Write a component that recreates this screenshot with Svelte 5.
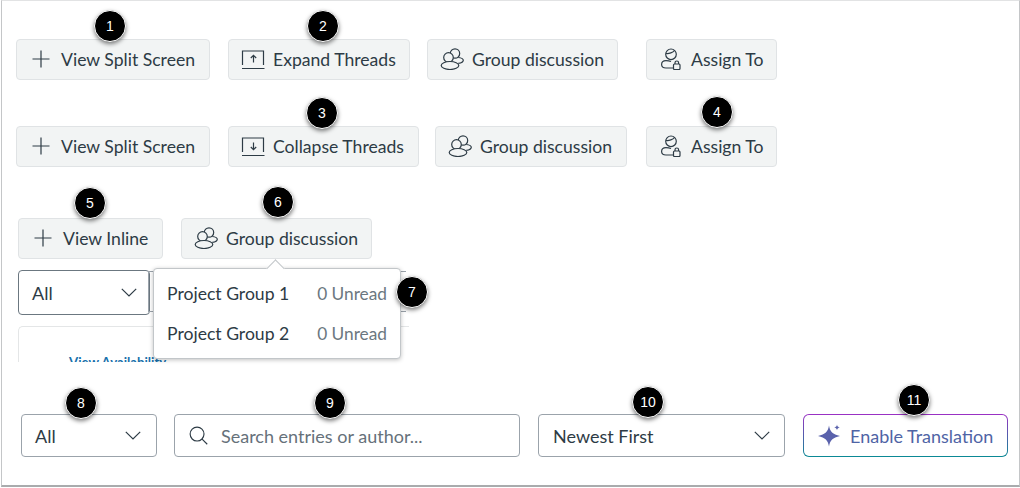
<script>
  const badges = [
    { n: 1, x: 110, y: 26 }, { n: 2, x: 323, y: 26 }, { n: 3, x: 322, y: 113 },
    { n: 4, x: 717, y: 112 }, { n: 5, x: 90, y: 203 }, { n: 6, x: 278, y: 202 },
    { n: 7, x: 412, y: 292 }, { n: 8, x: 81, y: 403 }, { n: 9, x: 330, y: 403 },
    { n: 10, x: 648, y: 402 }, { n: 11, x: 914, y: 400 }
  ];
</script>

{#snippet plus()}
  <svg class="ic" viewBox="0 0 18 18"><path d="M9 .5v17M.5 9h17" /></svg>
{/snippet}
{#snippet expand()}
  <svg class="ic wide" viewBox="0 0 24 22"><path d="M1.500 17V3h21v14M1 20.500h22.500M12.500 14.500V7.500M9.800 10 12.500 7.300 15.200 10" /></svg>
{/snippet}
{#snippet collapse()}
  <svg class="ic wide" viewBox="0 0 24 22"><path d="M1.500 17V3h21v14M1 20.500h22.500M12.500 7.500v7M9.800 12l2.700 2.700 2.700-2.700" /></svg>
{/snippet}
{#snippet group()}
  <svg class="ic wide" viewBox="0 0 24 22"><circle cx="15" cy="5.500" r="4.700" /><path d="M18.300 9.500c3 .4 5 1.400 5 2.800 0 1.500-2 2.700-5 3.100" /><circle class="front" cx="8.500" cy="9.500" r="4.800" /><ellipse class="front" cx="10" cy="17.500" rx="8.800" ry="4" /></svg>
{/snippet}
{#snippet assign()}
  <svg class="ic wide" viewBox="0 0 24 22"><circle cx="12" cy="6.300" r="5.300" /><path d="M7 5.500c3 .5 7-1 8.500-3" /><path d="M12 13.500c-2-.9-3.500-.9-5-.9-3 0-4.400 1.900-4.400 3.900S4 20 7 20h7" /><rect x="14.500" y="16" width="6.500" height="5.500" rx="1" /><path d="M16 16v-1.200a1.800 1.800 0 0 1 3.600 0V16" /></svg>
{/snippet}
{#snippet chevron()}
  <svg class="chev" viewBox="0 0 16 9"><path d="M.8.8 8 8 15.200.8" /></svg>
{/snippet}

<div class="frame">
  <div class="row r1">
    <button class="b w194">{@render plus()}View Split Screen</button>
    <button class="b w182">{@render expand()}Expand Threads</button>
    <button class="b w191">{@render group()}Group discussion</button>
    <button class="b w131">{@render assign()}Assign To</button>
  </div>
  <div class="row r2">
    <button class="b w194">{@render plus()}View Split Screen</button>
    <button class="b w191">{@render collapse()}Collapse Threads</button>
    <button class="b w192">{@render group()}Group discussion</button>
    <button class="b w131">{@render assign()}Assign To</button>
  </div>
  <div class="row r3">
    <button class="b w145">{@render plus()}View Inline</button>
    <button class="b w191">{@render group()}Group discussion</button>
  </div>

  <div class="clip">
    <div class="filters">
      <div class="sel dark s132"><span>All</span>{@render chevron()}</div>
      <div class="hidden-input"></div>
    </div>
    <div class="card"><a href="#top">View Availability</a></div>
  </div>

  <div class="row r5">
    <div class="sel s136"><span>All</span>{@render chevron()}</div>
    <div class="search">
      <svg class="mag" viewBox="0 0 20 20"><circle cx="8.500" cy="8.500" r="7.300" /><path d="m13.800 13.800 5.400 5.400" /></svg>
      <span>Search entries or author...</span>
    </div>
    <div class="sel s247"><span>Newest First</span>{@render chevron()}</div>
    <button class="ai">
      <svg class="spark" viewBox="0 0 24 24"><path d="M12 1.500c.9 6 3.700 9 11 10.500-7.300 1.500-10.100 4.500-11 10.500C11.100 16.500 8.300 13.500 1 12 8.300 10.500 11.100 7.500 12 1.500Z" /><path d="M20 .5c.2 1.700 1 2.600 2.800 2.900-1.800.3-2.600 1.200-2.800 2.900-.2-1.700-1-2.600-2.800-2.900C19 3.100 19.800 2.200 20 .5Z" /></svg>
      <span>Enable Translation</span>
    </button>
  </div>

  <div class="pop">
    <div class="tip"></div>
    <div class="item"><span>Project Group 1</span><span class="un">0 Unread</span></div>
    <div class="item"><span>Project Group 2</span><span class="un">0 Unread</span></div>
  </div>

  {#each badges as b}
    <div class="badge" style="left:{b.x - 18}px;top:{b.y - 17}px">{b.n}</div>
  {/each}
</div>

<style>
  :global(body) { margin: 0; background: #fff; }
  .frame {
    position: relative;
    box-sizing: border-box;
    width: 1019px;
    height: 487px;
    margin-left: 1px;
    border: 1px solid #c4c6c8;
    border-top-color: #e2e3e4;
    border-bottom: 2px solid #a9abad;
    background: #fff;
    font-family: Lato, "Liberation Sans", sans-serif;
    font-size: 18px;
    color: #2d3b45;
    overflow: hidden;
  }
  .row { display: flex; align-items: flex-start; }
  .r1 { margin: 38px 0 0 14px; }
  .r1 .b:nth-child(2) { margin-left: 18px; }
  .r1 .b:nth-child(3) { margin-left: 17px; }
  .r1 .b:nth-child(4) { margin-left: 28px; }
  .r2 { margin: 46px 0 0 14px; }
  .r2 .b:nth-child(2) { margin-left: 18px; }
  .r2 .b:nth-child(3) { margin-left: 16px; }
  .r2 .b:nth-child(4) { margin-left: 19px; }
  .r3 { margin: 51px 0 0 16px; gap: 18px; }
  .b {
    box-sizing: border-box;
    height: 41px;
    display: flex;
    align-items: center;
    padding: 0 0 1px;
    background: #f2f4f4;
    border: 1px solid #e0e3e5;
    border-radius: 4px;
    font: inherit;
    font-size: 17.6px;
    color: inherit;
    white-space: nowrap;
  }
  .w194 { width: 194px; }
  .w182 { width: 182px; }
  .w191 { width: 191px; }
  .w192 { width: 192px; }
  .w131 { width: 131px; }
  .w145 { width: 145px; }
  .ic { width: 18px; height: 18px; fill: none; stroke: #2d3b45; stroke-width: 1.2; flex: none; margin: 0 11px 0 15px; }
  .ic.wide { width: 24px; height: 22px; margin: 0 8px 0 12px; }
  .front { fill: #f2f4f4; }
  .clip { position: relative; margin: 11px 0 0 16px; height: 92px; overflow: hidden; }
  .filters { display: flex; }
  .sel {
    box-sizing: border-box;
    height: 43px;
    display: flex;
    align-items: center;
    justify-content: space-between;
    padding: 0 15px 0 13px;
    background: #fff;
    border: 1px solid #9ba3ab;
    border-radius: 4px;
    white-space: nowrap;
  }
  .sel.dark { height: 45px; border-color: #6b7780; }
  .s132 { width: 132px; padding-right: 12px; }
  .s136 { width: 136px; }
  .s247 { width: 247px; margin-left: 1px; padding-left: 14px; padding-right: 14px; }
  .chev { width: 16px; height: 9px; fill: none; stroke: #2d3b45; stroke-width: 1.2; }
  .hidden-input { width: 258px; height: 41px; margin: 1px 0 0 -2px; box-sizing: border-box; border: 1px solid #9ba3ab; border-right: 0; }
  .card {
    box-sizing: border-box;
    width: 391px;
    height: 60px;
    margin-top: 11px;
    padding: 27px 0 0 50px;
    border: 1px solid #e4e6e7;
    border-right: 0;
    border-radius: 5px 0 0 0;
    font-size: 13.200px;
    font-weight: 700;
  }
  .card a { color: #1770ab; text-decoration: none; }
  .r5 { position: absolute; left: 19px; top: 413px; gap: 17px; }
  .search {
    box-sizing: border-box;
    width: 346px;
    height: 43px;
    display: flex;
    align-items: center;
    gap: 13px;
    padding-left: 14px;
    border: 1px solid #9ba3ab;
    border-radius: 4px;
    color: #66717a;
  }
  .mag { width: 19px; height: 19px; fill: none; stroke: #2d3b45; stroke-width: 1.2; }
  .ai {
    box-sizing: border-box;
    width: 205px;
    height: 43px;
    margin-left: 1px;
    display: flex;
    align-items: center;
    gap: 9px;
    padding: 0 0 0 13px;
    border: 1px solid transparent;
    border-radius: 6px;
    background: linear-gradient(#fff, #fff) padding-box, linear-gradient(180deg, #9b30c4, #0a8a95) border-box;
    font: inherit;
    color: #4f64a5;
    white-space: nowrap;
  }
  .spark { width: 24px; height: 24px; fill: #5a62ac; flex: none; }
  .pop {
    position: absolute;
    left: 151px;
    top: 267px;
    box-sizing: border-box;
    width: 248px;
    height: 91px;
    padding-top: 4px;
    background: #fff;
    border: 1px solid #c2c6c9;
    border-radius: 4px;
    box-shadow: 0 1px 4px rgba(0, 0, 0, 0.25);
    font-size: 17.6px;
  }
  .tip {
    position: absolute;
    left: 115px;
    top: -7px;
    width: 12px;
    height: 12px;
    background: #fff;
    border: 1px solid #c2c6c9;
    border-right: 0;
    border-bottom: 0;
    transform: rotate(45deg);
  }
  .item { display: flex; justify-content: space-between; align-items: center; height: 40px; padding: 0 13px; position: relative; }
  .un { color: #6b7780; font-size: 17.300px; }
  .badge {
    position: absolute;
    width: 30px;
    height: 30px;
    display: flex;
    align-items: center;
    justify-content: center;
    border-radius: 50%;
    background: #000;
    border: 1px solid #fff;
    color: #fff;
    font-family: "Liberation Sans", sans-serif;
    font-size: 14px;
    box-shadow: 0 2px 4px rgba(0, 0, 0, 0.5);
  }
</style>
